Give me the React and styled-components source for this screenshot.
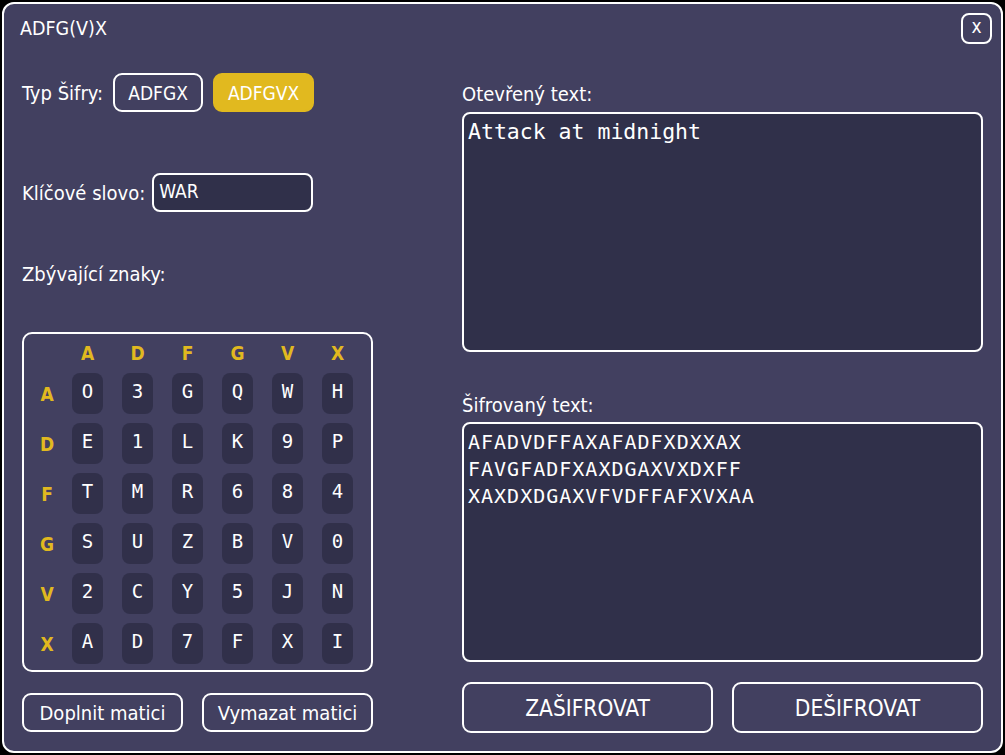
import React from "react";
import styled, { createGlobalStyle } from "styled-components";

const GlobalStyle = createGlobalStyle`
  html, body {
    margin: 0;
    padding: 0;
    background: #000;
  }
  body {
    font-family: "DejaVu Sans Condensed", "DejaVu Sans", sans-serif;
    font-stretch: condensed;
    color: #fff;
  }
`;

const uiFont = `"DejaVu Sans Condensed", "DejaVu Sans", sans-serif`;
const monoFont = `"DejaVu Sans Mono", "Liberation Mono", monospace`;

const Window = styled.div`
  box-sizing: border-box;
  margin: 2px;
  width: 1001px;
  height: 751px;
  border: 2px solid #fff;
  border-radius: 12px;
  background: #424060;
  padding: 9px 18px 0 18px;
  font-family: ${uiFont};
`;

const Header = styled.div`
  display: flex;
  align-items: center;
  justify-content: space-between;
  height: 30px;
`;

const Title = styled.div`
  font-size: 19.5px;
  margin-left: -2px;
`;

const CloseButton = styled.button`
  box-sizing: border-box;
  width: 31px;
  height: 31px;
  margin-right: -9px;
  border: 2px solid #fff;
  border-radius: 8px;
  background: transparent;
  color: #fff;
  font-family: ${uiFont};
  font-size: 19px;
  line-height: 1;
  padding: 0 0 3px;
`;

const Body = styled.div`
  display: grid;
  grid-template-columns: 351px 521px;
  column-gap: 89px;
`;

const Column = styled.div`
  display: flex;
  flex-direction: column;
`;

const Row = styled.div`
  display: flex;
  align-items: center;
  gap: ${(p) => p.$gap}px;
  margin-top: ${(p) => p.$top}px;
  height: 39px;
`;

const Label = styled.div`
  font-size: 20px;
  line-height: 24px;
  margin-top: ${(p) => p.$top || 0}px;
`;

const OutlineButton = styled.button`
  box-sizing: border-box;
  height: ${(p) => p.$h || 39}px;
  width: ${(p) => p.$w}px;
  border: 2px solid ${(p) => (p.$active ? "#e1b91f" : "#fff")};
  border-radius: 9px;
  background: ${(p) => (p.$active ? "#e1b91f" : "transparent")};
  color: #fff;
  font-family: ${uiFont};
  font-size: ${(p) => p.$fs || 19}px;
  padding: 0;
`;

const KeyInput = styled.input`
  box-sizing: border-box;
  width: 161px;
  height: 39px;
  border: 2px solid #fff;
  border-radius: 8px;
  background: #30304a;
  color: #fff;
  font-family: ${uiFont};
  font-size: 19px;
  padding: 0 5px 4px;
  outline: none;
`;

const MatrixBox = styled.div`
  box-sizing: border-box;
  margin-top: 46px;
  width: 351px;
  height: 340px;
  border: 2px solid #fff;
  border-radius: 10px;
  padding: 7px 0 0 17px;
`;

const MatrixGrid = styled.div`
  display: grid;
  grid-template-columns: 12px repeat(6, 31px);
  grid-template-rows: 23px repeat(6, 41px);
  column-gap: 19px;
  row-gap: 9px;
`;

const Head = styled.div`
  display: flex;
  align-items: center;
  justify-content: center;
  color: #e1b91f;
  font-weight: bold;
  font-size: 19px;
  padding-top: ${(p) => (p.$side ? 1 : 0)}px;
`;

const Cell = styled.div`
  display: flex;
  align-items: center;
  justify-content: center;
  background: #31304a;
  border-radius: 8px;
  font-family: ${monoFont};
  font-size: 19px;
  padding-bottom: 6px;
`;

const ButtonRow = styled.div`
  display: flex;
  justify-content: space-between;
  margin-top: ${(p) => p.$top}px;
`;

const TextArea = styled.textarea`
  box-sizing: border-box;
  width: 521px;
  height: 240px;
  margin-top: ${(p) => p.$mt}px;
  border: 2px solid #fff;
  border-radius: 8px;
  background: #30304a;
  color: #fff;
  font-family: ${monoFont};
  font-size: ${(p) => p.$fs}px;
  line-height: 27px;
  letter-spacing: ${(p) => p.$ls || 0}px;
  padding: ${(p) => p.$pt}px 4px 3px;
  resize: none;
  outline: none;
`;

const rows = ["A", "D", "F", "G", "V", "X"];
const matrix = [
  ["O", "3", "G", "Q", "W", "H"],
  ["E", "1", "L", "K", "9", "P"],
  ["T", "M", "R", "6", "8", "4"],
  ["S", "U", "Z", "B", "V", "0"],
  ["2", "C", "Y", "5", "J", "N"],
  ["A", "D", "7", "F", "X", "I"],
];

const cipher =
  "AFADVDFFAXAFADFXDXXAX\nFAVGFADFXAXDGAXVXDXFF\nXAXDXDGAXVFVDFFAFXVXAA";

export default function App() {
  return (
    <>
      <GlobalStyle />
      <Window>
        <Header>
          <Title>ADFG(V)X</Title>
          <CloseButton>x</CloseButton>
        </Header>
        <Body>
          <Column>
            <Row $top={30} $gap={10}>
              <Label>Typ Šifry:</Label>
              <OutlineButton $w={90}>ADFGX</OutlineButton>
              <OutlineButton $w={101} $active>
                ADFGVX
              </OutlineButton>
            </Row>
            <Row $top={61} $gap={7}>
              <Label>Klíčové slovo:</Label>
              <KeyInput defaultValue="WAR" />
            </Row>
            <Label $top={50}>Zbývající znaky:</Label>
            <MatrixBox>
              <MatrixGrid>
                <div />
                {rows.map((r) => (
                  <Head key={"h" + r}>{r}</Head>
                ))}
                {matrix.map((line, i) => (
                  <React.Fragment key={i}>
                    <Head $side>{rows[i]}</Head>
                    {line.map((c, j) => (
                      <Cell key={j}>{c}</Cell>
                    ))}
                  </React.Fragment>
                ))}
              </MatrixGrid>
            </MatrixBox>
            <ButtonRow $top={21}>
              <OutlineButton $w={161} $fs={20}>
                Doplnit matici
              </OutlineButton>
              <OutlineButton $w={171} $fs={20}>
                Vymazat matici
              </OutlineButton>
            </ButtonRow>
          </Column>
          <Column>
            <Label $top={39}>Otevřený text:</Label>
            <TextArea
              $mt={6}
              $fs={21.5}
              $pt={4}
              defaultValue="Attack at midnight"
            />
            <Label $top={41}>Šifrovaný text:</Label>
            <TextArea $mt={5} $fs={20} $ls={1} $pt={5} defaultValue={cipher} />
            <ButtonRow $top={20}>
              <OutlineButton $w={251} $h={51} $fs={22.5}>
                ZAŠIFROVAT
              </OutlineButton>
              <OutlineButton $w={251} $h={51} $fs={22.5}>
                DEŠIFROVAT
              </OutlineButton>
            </ButtonRow>
          </Column>
        </Body>
      </Window>
    </>
  );
}
